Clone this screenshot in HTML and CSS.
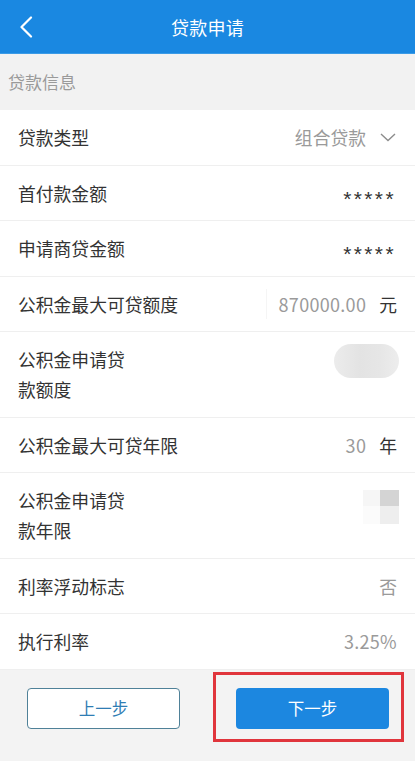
FILE: index.html
```html
<!DOCTYPE html>
<html lang="zh-CN">
<head>
<meta charset="utf-8">
<meta name="viewport" content="width=device-width, initial-scale=1">
<title>贷款申请</title>
<link rel="stylesheet" href="styles.css">
</head>
<body>
<div class="page">
  <header class="topbar">
    <button class="back" aria-label="返回">
      <svg width="14" height="22" viewBox="0 0 14 22"><path d="M12 1.5 L2.5 11 L12 20.5" fill="none" stroke="#fff" stroke-width="2.2" stroke-linecap="round" stroke-linejoin="round"/></svg>
    </button>
    <h1 class="title">贷款申请</h1>
    <span class="spacer"></span>
  </header>

  <div class="section-title">贷款信息</div>

  <ul class="list">
    <li class="row">
      <span class="label">贷款类型</span>
      <span class="value muted">组合贷款
        <svg class="chev" width="16" height="9" viewBox="0 0 16 9"><path d="M1 1 L8 7.5 L15 1" fill="none" stroke="#8c8c8c" stroke-width="1.4"/></svg>
      </span>
    </li>
    <li class="row">
      <span class="label">首付款金额</span>
      <span class="value stars">*****</span>
    </li>
    <li class="row">
      <span class="label">申请商贷金额</span>
      <span class="value stars">*****</span>
    </li>
    <li class="row">
      <span class="label">公积金最大可贷额度</span>
      <span class="value field"><span class="muted num">870000.00</span><span class="unit">元</span></span>
    </li>
    <li class="row double">
      <span class="label">公积金申请贷<br>款额度</span>
      <span class="blur-pill"></span>
    </li>
    <li class="row">
      <span class="label">公积金最大可贷年限</span>
      <span class="value"><span class="muted num">30</span><span class="unit">年</span></span>
    </li>
    <li class="row double">
      <span class="label">公积金申请贷<br>款年限</span>
      <span class="blur-grid"><i class="b1"></i><i class="b2"></i><i class="b3"></i><i class="b4"></i></span>
    </li>
    <li class="row">
      <span class="label">利率浮动标志</span>
      <span class="value muted">否</span>
    </li>
    <li class="row">
      <span class="label">执行利率</span>
      <span class="value muted num">3.25%</span>
    </li>
  </ul>

  <footer class="footer">
    <button class="btn btn-outline">上一步</button>
    <div class="btn-wrap">
      <button class="btn btn-primary">下一步</button>
      <span class="highlight"></span>
    </div>
  </footer>
</div>
</body>
</html>
```

FILE: styles.css
```css
* { box-sizing: border-box; }
html, body { margin: 0; padding: 0; }
body {
  width: 415px;
  height: 761px;
  overflow: hidden;
  background: #f3f3f3;
  font-family: "Noto Sans CJK SC", "Noto Sans", sans-serif;
  color: #333;
}
.page { display: flex; flex-direction: column; height: 761px; }

.topbar {
  height: 54px;
  background: #1a88e1;
  display: grid;
  grid-template-columns: 60px 1fr 60px;
  align-items: center;
  border-bottom: 1px solid #3b9be6;
}
.back {
  background: none; border: 0; padding: 0 0 0 19px;
  display: flex; align-items: center; height: 100%;
}
.title {
  margin: 0;
  text-align: center;
  color: #fff;
  font-size: 18px;
  font-weight: 400;
  letter-spacing: 0.3px;
}

.section-title {
  height: 56px;
  line-height: 56px;
  padding-left: 8px;
  font-size: 17px;
  color: #9a9a9a;
  background: #f2f2f2;
}

.list {
  list-style: none;
  margin: 0;
  padding: 0;
  background: #fff;
}
.row {
  display: flex;
  justify-content: space-between;
  align-items: center;
  padding: 12px 18px 12.5px 18px;
  line-height: 30px;
  font-size: 17.8px;
  border-bottom: 1px solid #efefef;
}
.row.double { align-items: flex-start; }
.label { color: #333; }
.value { display: flex; align-items: center; }
.muted { color: #9a9a9a; }
.num { font-size: 18px; letter-spacing: 0.3px; }
.unit { color: #333; margin-left: 13px; }
.chev { margin-left: 14px; margin-right: 1px; margin-top: 1px; }

.stars {
  font-family: "Liberation Sans", sans-serif;
  font-size: 21px;
  letter-spacing: 2.4px;
  margin-right: 1px;
  height: 30px;
  padding-top: 12px;
  line-height: 18px;
  align-items: flex-start;
  color: #333;
}

.field {
  border-left: 1px solid #f5f5f5;
  padding-left: 12px;
}

.blur-pill {
  width: 65px;
  height: 34px;
  margin-right: -2px;
  border-radius: 17px;
  background: linear-gradient(90deg, #ececec 0%, #e3e3e3 40%, #e6e6e6 70%, #ededed 100%);
}

.blur-grid {
  display: grid;
  grid-template-columns: 17px 19px;
  grid-template-rows: 16px 18px;
  margin-top: 5px;
  margin-right: -2px;
}
.blur-grid i { display: block; }
.blur-grid .b1 { background: #f6f6f6; }
.blur-grid .b2 { background: #d4d4d4; }
.blur-grid .b3 { background: #fbfbfb; }
.blur-grid .b4 { background: #eeeeee; }

.footer {
  flex: 1;
  background: #f3f3f3;
  display: grid;
  grid-template-columns: 153px 153px;
  column-gap: 56px;
  align-content: start;
  padding: 18px 26px 0 27px;
}
.btn {
  height: 41px;
  width: 100%;
  border-radius: 4px;
  font-family: "Noto Sans CJK SC", sans-serif;
  font-size: 16.5px;
  cursor: pointer;
}
.btn-outline {
  background: #fff;
  color: #2f7db4;
  border: 1px solid #4f8198;
}
.btn-primary {
  background: #1c87e0;
  color: #fff;
  border: 0;
}
.btn-wrap { position: relative; }
.highlight {
  position: absolute;
  left: -23px;
  top: -16px;
  right: -15px;
  bottom: -13px;
  border: 3px solid #e0353c;
  pointer-events: none;
}
```
